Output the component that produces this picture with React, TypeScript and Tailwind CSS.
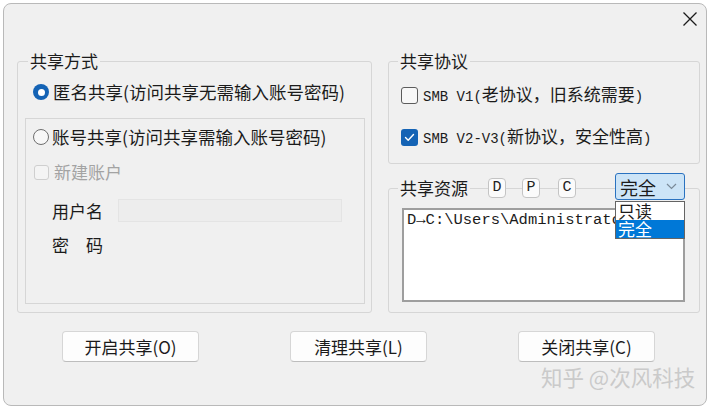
import React from 'react';

const cjk = { fontFamily: '"Noto Sans CJK SC", "Noto Sans", sans-serif' };
const mono = { fontFamily: '"Liberation Mono", "Noto Sans CJK SC", monospace' };

const Radio: React.FC<{ checked?: boolean }> = ({ checked }) =>
  checked ? (
    <span className="w-4 h-4 rounded-full bg-[#1463b5] flex items-center justify-center shrink-0">
      <span className="w-[7px] h-[7px] rounded-full bg-white" />
    </span>
  ) : (
    <span className="w-4 h-4 rounded-full border border-[#6e6e6e] bg-[#f7f7f7] shrink-0" />
  );

const Check: React.FC<{ checked?: boolean; disabled?: boolean }> = ({ checked, disabled }) => {
  if (disabled) return <span className="w-[15px] h-[15px] rounded-[3px] border border-[#cfcfcf] bg-[#f4f4f4] shrink-0" />;
  if (checked)
    return (
      <span className="w-[17px] h-[17px] rounded-[3px] bg-[#1463b5] flex items-center justify-center shrink-0">
        <svg width="11" height="9" viewBox="0 0 11 9" fill="none">
          <polyline points="1.5,4.5 4.2,7.2 9.5,1.5" stroke="white" strokeWidth="1.4" strokeLinecap="round" strokeLinejoin="round" />
        </svg>
      </span>
    );
  return <span className="w-[17px] h-[17px] rounded-[3px] border border-[#5c5c5c] bg-[#f8f8f8] shrink-0" />;
};

const SmallBtn: React.FC<{ label: string; left: string }> = ({ label, left }) => (
  <div
    className={`absolute top-[-11px] ${left} w-[18px] h-[20px] rounded-[4px] border border-[#c4c4c4] bg-[#fbfbfb] flex items-center justify-center text-[15px] text-[#222]`}
    style={mono}
  >
    {label}
  </div>
);

const DlgButton: React.FC<{ children: React.ReactNode }> = ({ children }) => (
  <div className="w-[137px] h-[31px] rounded-[4px] border border-[#d6d6d6] border-b-[#bdbdbd] bg-[#fdfdfd] flex items-center justify-center text-[17px] text-[#1b1b1b]">
    {children}
  </div>
);

// group box caption sits on the top border line
const Caption: React.FC<{ children: React.ReactNode; className?: string }> = ({ children, className = '' }) => (
  <div className={`-mt-[12px] w-fit px-[2px] bg-[#f0f0f0] text-[17px] leading-[22px] ${className}`}>{children}</div>
);

export default function App() {
  return (
    <div className="w-[714px] h-[408px] bg-white overflow-hidden pt-[3px] pl-[3px]" style={cjk}>
      <div className="relative w-[704px] h-[403px] rounded-[8px] border border-[#b9b9b9] bg-[#f0f0f0] flex flex-col text-[#1b1b1b]">
        {/* title bar */}
        <div className="h-[57px] shrink-0 flex justify-end items-start pt-[7px] pr-[8px]">
          <svg width="16" height="16" viewBox="0 0 16 16">
            <path d="M1.5 1.5 L14.5 14.5 M14.5 1.5 L1.5 14.5" stroke="#1b1b1b" strokeWidth="1.3" />
          </svg>
        </div>

        {/* main row */}
        <div className="flex items-start pl-[13px] gap-[16px]">
          {/* 共享方式 */}
          <div className="w-[355px] border border-[#d6d6d6] rounded-[3px] px-[7px] pb-[8px]">
            <Caption className="ml-[3px]">共享方式</Caption>
            <div className="mt-[9px] ml-[8px] h-[22px] flex items-center gap-[4px] text-[17.5px] leading-[22px]">
              <Radio checked />
              <span>匿名共享(访问共享无需输入账号密码)</span>
            </div>
            <div className="mt-[15px] w-[340px] h-[186px] border border-[#d6d6d6] pt-[7px] pl-[7px] text-[17px] leading-[22px]">
              <div className="h-[22px] flex items-center gap-[3px] text-[17.5px]">
                <Radio />
                <span>账号共享(访问共享需输入账号密码)</span>
              </div>
              <div className="mt-[13px] h-[22px] flex items-center gap-[5px] pl-[1px]">
                <Check disabled />
                <span className="text-[#a3a3a3]">新建账户</span>
              </div>
              <div className="mt-[16px] h-[23px] flex items-center pl-[19px] gap-[15px]">
                <span className="w-[51px]">用户名</span>
                <div className="w-[224px] h-[23px] border border-[#e4e4e4] bg-[#ededed]" />
              </div>
              <div className="mt-[12px] h-[22px] flex items-center pl-[19px]">
                <span className="w-[51px]">密　码</span>
              </div>
            </div>
          </div>

          <div className="w-[312px] flex flex-col gap-[24px]">
            {/* 共享协议 */}
            <div className="border border-[#d6d6d6] rounded-[3px] pl-[12px] pb-[15px] text-[17px] leading-[22px]">
              <Caption className="-ml-[3px]">共享协议</Caption>
              <div className="mt-[12px] h-[22px] flex items-center gap-[5px]">
                <Check />
                <span>
                  <span className="text-[14px]" style={mono}>SMB V1(</span>老协议，旧系统需要<span className="text-[14px]" style={mono}>)</span>
                </span>
              </div>
              <div className="mt-[20px] h-[22px] flex items-center gap-[5px]">
                <Check checked />
                <span>
                  <span className="text-[14px]" style={mono}>SMB V2-V3(</span>新协议，安全性高<span className="text-[14px]" style={mono}>)</span>
                </span>
              </div>
            </div>

            {/* 共享资源 */}
            <div className="relative border border-[#d6d6d6] rounded-[3px] pl-[13px] pb-[10px] text-[17px] leading-[22px]">
              <Caption className="-ml-[4px]">共享资源</Caption>
              <div
                className="mt-[9px] w-[283px] h-[94px] bg-white border-2 border-[#9e9e9e] pl-[3px] text-[15.5px] leading-[20px] whitespace-nowrap overflow-hidden"
                style={mono}
              >
                D→C:\Users\Administrato
              </div>

              <SmallBtn label="D" left="left-[99px]" />
              <SmallBtn label="P" left="left-[133px]" />
              <SmallBtn label="C" left="left-[169px]" />

              {/* combobox */}
              <div className="absolute left-[226px] top-[-16px] w-[70px] h-[27px] rounded-[3px] border border-[#2a72c0] bg-[#cce4f7] flex items-center justify-between pl-[4px] pr-[7px] text-[18px] leading-[22px]">
                <span>完全</span>
                <svg width="11" height="7" viewBox="0 0 11 7" fill="none">
                  <polyline points="1,1 5.5,5.5 10,1" stroke="#7a8a99" strokeWidth="1.2" />
                </svg>
              </div>

              {/* dropdown list */}
              <div className="absolute left-[226px] top-[12px] w-[70px] h-[38px] border border-[#646464] bg-white flex flex-col text-[17px] leading-[18px]">
                <div className="h-[18px] pl-[2px]">只读</div>
                <div className="h-[18px] bg-[#0078d7] text-white pl-[2px]">完全</div>
              </div>
            </div>
          </div>
        </div>

        {/* buttons */}
        <div className="mt-[18px] pl-[58px] flex gap-[91px]">
          <DlgButton>开启共享(O)</DlgButton>
          <DlgButton>清理共享(L)</DlgButton>
          <DlgButton>关闭共享(C)</DlgButton>
        </div>

        {/* watermark */}
        <div className="absolute left-[537px] top-[361px] text-[21.5px] leading-[24px] text-[#cacaca] whitespace-nowrap">
          知乎 @次风科技
        </div>
      </div>
    </div>
  );
}
